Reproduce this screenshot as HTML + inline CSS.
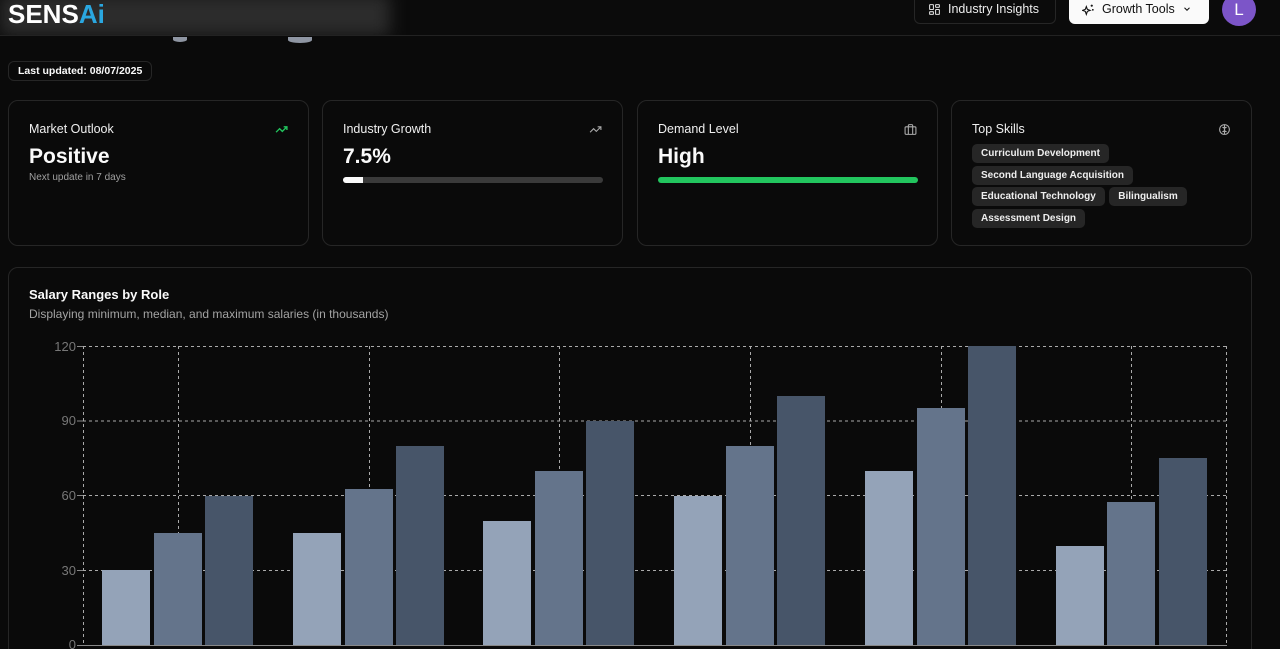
<!DOCTYPE html>
<html><head><style>
*{margin:0;padding:0;box-sizing:border-box}
html,body{width:1280px;height:649px;overflow:hidden}
body{background:#0a0a0a;font-family:"Liberation Sans",sans-serif;color:#fafafa;position:relative}
.hdr{position:absolute;left:0;top:0;width:1280px;height:36px;border-bottom:1px solid #222;background:#0b0b0b;overflow:hidden}
.blur{position:absolute;left:0;top:-6px;width:390px;height:42px;background:#2c2c2c;filter:blur(8px)}
.desc{position:absolute;background:#8e95a2;border-radius:0 0 50% 50%}
.logo{position:absolute;left:8px;top:-1px;font-size:26px;font-weight:bold;color:#fff}
.logo span{color:#2aa7e0}
.btn{position:absolute;top:-6px;height:30px;border-radius:6px;font-size:12.5px;display:flex;align-items:center;gap:7px;padding:0 13px;white-space:nowrap}
.card{position:absolute;border:1px solid #262626;border-radius:10px;background:#0a0a0a}
.t{position:absolute;left:20px;top:21px;font-size:12.5px;color:#f0f0f0}
.v{position:absolute;left:20px;top:44px;font-size:21px;font-weight:bold}
.ic{position:absolute;right:20px;top:22px}
.bar{position:absolute;left:20px;top:76px;width:260px;height:6px;border-radius:3px;background:#3a3a3a;overflow:hidden}
.chips{position:absolute;left:20px;top:43px;width:270px}
.chip{display:inline-block;background:#262626;border-radius:5px;font-size:10px;font-weight:bold;padding:4px 9px;height:19px;margin-bottom:2.5px;color:#eee;vertical-align:top}
</style></head><body>
<div class="hdr"><div class="blur"></div>
<div class="logo">SENS<span>Ai</span></div>
<div class="btn" style="left:914px;width:142px;border:1px solid #262626;color:#eee"><svg width="13" height="13" viewBox="0 0 24 24" fill="none" stroke="#ddd" stroke-width="2"><rect x="3" y="3" width="7" height="9" rx="1"/><rect x="14" y="3" width="7" height="5" rx="1"/><rect x="14" y="12" width="7" height="9" rx="1"/><rect x="3" y="16" width="7" height="5" rx="1"/></svg>Industry Insights</div>
<div class="btn" style="left:1069px;width:140px;background:#fafafa;color:#111"><svg width="13" height="13" viewBox="0 0 24 24" fill="none" stroke="#111" stroke-width="2"><path d="M9.9 15.5 8 21l-1.9-5.5L1 13.6l5.1-1.9L8 6.5l1.9 5.2 5.1 1.9zM18 3v4M16 5h4M20 11v3M18.5 12.5h3"/></svg>Growth Tools <svg width="10" height="10" viewBox="0 0 24 24" fill="none" stroke="#111" stroke-width="2.5"><path d="m6 9 6 6 6-6"/></svg></div>
<div style="position:absolute;left:1222px;top:-7px;width:34px;height:33px;border-radius:50%;background:#7c55c8;color:#fff;font-size:17px;text-align:center;line-height:33px">L</div>
</div>
<div class="desc" style="left:173px;top:37px;width:14px;height:5px"></div>
<div class="desc" style="left:288px;top:37px;width:24px;height:6px"></div>
<div style="position:absolute;left:8px;top:61px;border:1px solid #262626;border-radius:6px;font-size:10.5px;font-weight:bold;padding:3px 9px">Last updated: 08/07/2025</div>

<div class="card" style="left:8px;top:100px;width:301px;height:146px">
<div class="t">Market Outlook</div><div class="v">Positive</div>
<div style="position:absolute;left:20px;top:71px;font-size:10px;color:#a0a0a0">Next update in 7 days</div>
<svg class="ic" width="13" height="13" viewBox="0 0 24 24" fill="none" stroke="#22c55e" stroke-width="2.5"><path d="M22 7 13.5 15.5 8.5 10.5 2 17M16 7h6v6"/></svg></div>
<div class="card" style="left:322px;top:100px;width:301px;height:146px">
<div class="t">Industry Growth</div><div class="v">7.5%</div>
<div class="bar"><div style="width:20px;height:6px;background:#fafafa"></div></div>
<svg class="ic" width="13" height="13" viewBox="0 0 24 24" fill="none" stroke="#aaa" stroke-width="2"><path d="M22 7 13.5 15.5 8.5 10.5 2 17M16 7h6v6"/></svg></div>
<div class="card" style="left:637px;top:100px;width:301px;height:146px">
<div class="t">Demand Level</div><div class="v">High</div>
<div class="bar" style="background:#22c55e"></div>
<svg class="ic" width="13" height="13" viewBox="0 0 24 24" fill="none" stroke="#aaa" stroke-width="2"><rect x="2" y="7" width="20" height="14" rx="2"/><path d="M16 21V5a2 2 0 0 0-2-2h-4a2 2 0 0 0-2 2v16"/></svg></div>
<div class="card" style="left:951px;top:100px;width:301px;height:146px">
<div class="t">Top Skills</div>
<svg class="ic" width="13" height="13" viewBox="0 0 24 24" fill="none" stroke="#aaa" stroke-width="2"><circle cx="12" cy="12" r="9"/><path d="M12 3v18M8 8c2 0 4 1 4 4M16 8c-2 0-4 1-4 4M8 16c2 0 4-1 4-4M16 16c-2 0-4-1-4-4"/></svg>
<div class="chips"><span class="chip">Curriculum Development</span><br><span class="chip">Second Language Acquisition</span><br><span class="chip">Educational Technology</span> <span class="chip">Bilingualism</span><br><span class="chip">Assessment Design</span></div></div>

<div class="card" style="left:8px;top:267px;width:1244px;height:400px">
<div style="position:absolute;left:20px;top:19px;font-size:13px;font-weight:bold">Salary Ranges by Role</div>
<div style="position:absolute;left:20px;top:39px;font-size:12px;color:#a3a3a3">Displaying minimum, median, and maximum salaries (in thousands)</div></div>
<svg style="position:absolute;left:0;top:0" width="1280" height="649">
<g fill="#777" font-size="13" font-family="Liberation Sans" text-anchor="end">
<text x="76" y="351">120</text><text x="76" y="425">90</text><text x="76" y="500">60</text><text x="76" y="575">30</text><text x="76" y="649">0</text></g>
<g stroke="#aaa" stroke-dasharray="3 3" stroke-width="1" fill="none">
<path d="M83 346.5H1227M83 421H1227M83 495.5H1227M83 570.5H1227M83.5 346V645M1226.5 346V645M178.5 346V645M369.5 346V645M559.5 346V645M750.5 346V645M941.5 346V645M1131.5 346V645"/></g>
<path d="M77 645.5H1227M77 346.5H83M77 421H83M77 495.5H83M77 570.5H83" stroke="#888"/>
<rect x="102" y="570" width="48" height="75" fill="#94a3b8"/><rect x="154" y="533" width="48" height="112" fill="#64748b"/><rect x="205" y="496" width="48" height="149" fill="#475569"/>
<rect x="293" y="533" width="48" height="112" fill="#94a3b8"/><rect x="345" y="489" width="48" height="156" fill="#64748b"/><rect x="396" y="446" width="48" height="199" fill="#475569"/>
<rect x="483" y="521" width="48" height="124" fill="#94a3b8"/><rect x="535" y="471" width="48" height="174" fill="#64748b"/><rect x="586" y="421" width="48" height="224" fill="#475569"/>
<rect x="674" y="496" width="48" height="149" fill="#94a3b8"/><rect x="726" y="446" width="48" height="199" fill="#64748b"/><rect x="777" y="396" width="48" height="249" fill="#475569"/>
<rect x="865" y="471" width="48" height="174" fill="#94a3b8"/><rect x="917" y="408" width="48" height="237" fill="#64748b"/><rect x="968" y="346" width="48" height="299" fill="#475569"/>
<rect x="1056" y="546" width="48" height="99" fill="#94a3b8"/><rect x="1107" y="502" width="48" height="143" fill="#64748b"/><rect x="1159" y="458" width="48" height="187" fill="#475569"/>
</svg>
</body></html>
